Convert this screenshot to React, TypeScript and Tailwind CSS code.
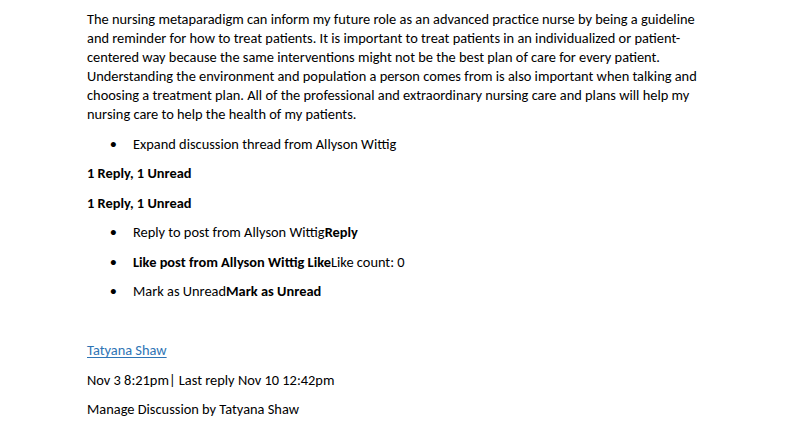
import React from "react";

const font = { fontFamily: "Carlito, Calibri, 'Liberation Sans', sans-serif" };

function Bullet({ children }: { children: React.ReactNode }) {
  return (
    <div className="flex mb-[10.5px]">
      <span className="w-[46px] shrink-0 text-right pr-[16px]">•</span>
      <span>{children}</span>
    </div>
  );
}

export default function App() {
  return (
    <div className="bg-white w-[785px] h-[430px] overflow-hidden text-[#000] text-[14.4px] leading-[19px] pl-[87px] pt-[10px]" style={font}>
      <p className="mb-[10.5px]">
        The nursing metaparadigm can inform my future role as an advanced practice nurse by being a guideline
        <br />
        and reminder for how to treat patients. It is important to treat patients in an individualized or patient-
        <br />
        centered way because the same interventions might not be the best plan of care for every patient.
        <br />
        Understanding the environment and population a person comes from is also important when talking and
        <br />
        choosing a treatment plan. All of the professional and extraordinary nursing care and plans will help my
        <br />
        nursing care to help the health of my patients.
      </p>
      <Bullet>Expand discussion thread from Allyson Wittig</Bullet>
      <p className="mb-[10.5px] font-bold">1 Reply, 1 Unread</p>
      <p className="mb-[10.5px] font-bold">1 Reply, 1 Unread</p>
      <Bullet>
        Reply to post from Allyson Wittig<b>Reply</b>
      </Bullet>
      <Bullet>
        <b>Like post from Allyson Wittig Like</b>Like count: 0
      </Bullet>
      <Bullet>
        Mark as Unread<b>Mark as Unread</b>
      </Bullet>
      <p className="mb-[10.5px] h-[19px]"></p>
      <p className="mb-[10.5px]">
        <a className="text-[#2e74b5] underline underline-offset-2">Tatyana Shaw</a>
      </p>
      <p className="mb-[10.5px]">Nov 3 8:21pm| Last reply Nov 10 12:42pm</p>
      <p className="mb-[10.5px]">Manage Discussion by Tatyana Shaw</p>
    </div>
  );
}
